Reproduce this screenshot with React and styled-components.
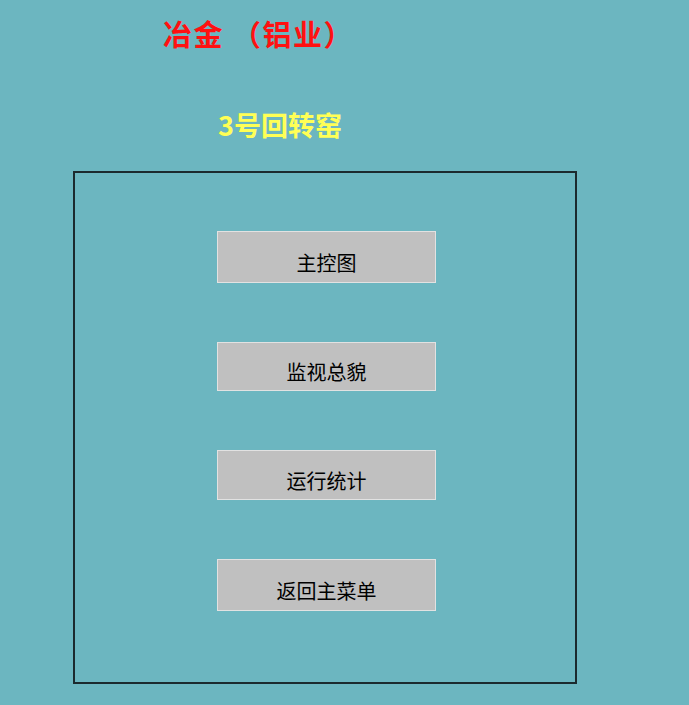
import styled, { createGlobalStyle } from "styled-components";

const GlobalStyle = createGlobalStyle`
body {
    margin: 0;
    background: #6cb6c0;
    font-family: "Noto Sans CJK SC", "Noto Sans", sans-serif;
}
`

const Page = styled.div`
width: 689px;
height: 705px;
background: #6cb6c0;
overflow: hidden;
`

const Title = styled.h1`
margin: 0;
padding: 11px 0 0 163px;
height: 44px;
font-size: 29px;
font-weight: bold;
letter-spacing: 1.5px;
line-height: 44px;
color: #ff1111;
white-space: pre;
`

const SubTitle = styled.h2`
margin: 0;
padding: 50px 0 0 218px;
height: 40px;
font-size: 27px;
font-weight: bold;
line-height: 40px;
color: #ffff55;
`

const Frame = styled.div`
margin: 26px 0 0 73px;
border: 2px solid #1c2a2e;
display: flex;
flex-direction: column;
align-items: flex-start;
gap: 59px;
padding: 58px 0 0 142px;
box-sizing: content-box;
width: 358px;
height: 451px;
`

const MenuButton = styled.button`
width: 219px;
height: ${props => props.h}px;
background: #c0c0c0;
border: 1px solid #e2e2e2;
padding: 10px 0 0;
margin: 0;
font-family: "Noto Sans CJK SC", sans-serif;
font-size: 20px;
color: #000;
display: flex;
align-items: center;
justify-content: center;
cursor: pointer;
`

const buttons = [
    { label: "主控图", h: 52 },
    { label: "监视总貌", h: 49 },
    { label: "运行统计", h: 50 },
    { label: "返回主菜单", h: 52 },
]

function App() {
    return (
        <Page>
            <GlobalStyle />
            <Title>冶金 （铝业）</Title>
            <SubTitle>3号回转窑</SubTitle>
            <Frame>
                {buttons.map((b, index) => (
                    <MenuButton key={index} h={b.h}>{b.label}</MenuButton>
                ))}
            </Frame>
        </Page>
    )
}

export default App
